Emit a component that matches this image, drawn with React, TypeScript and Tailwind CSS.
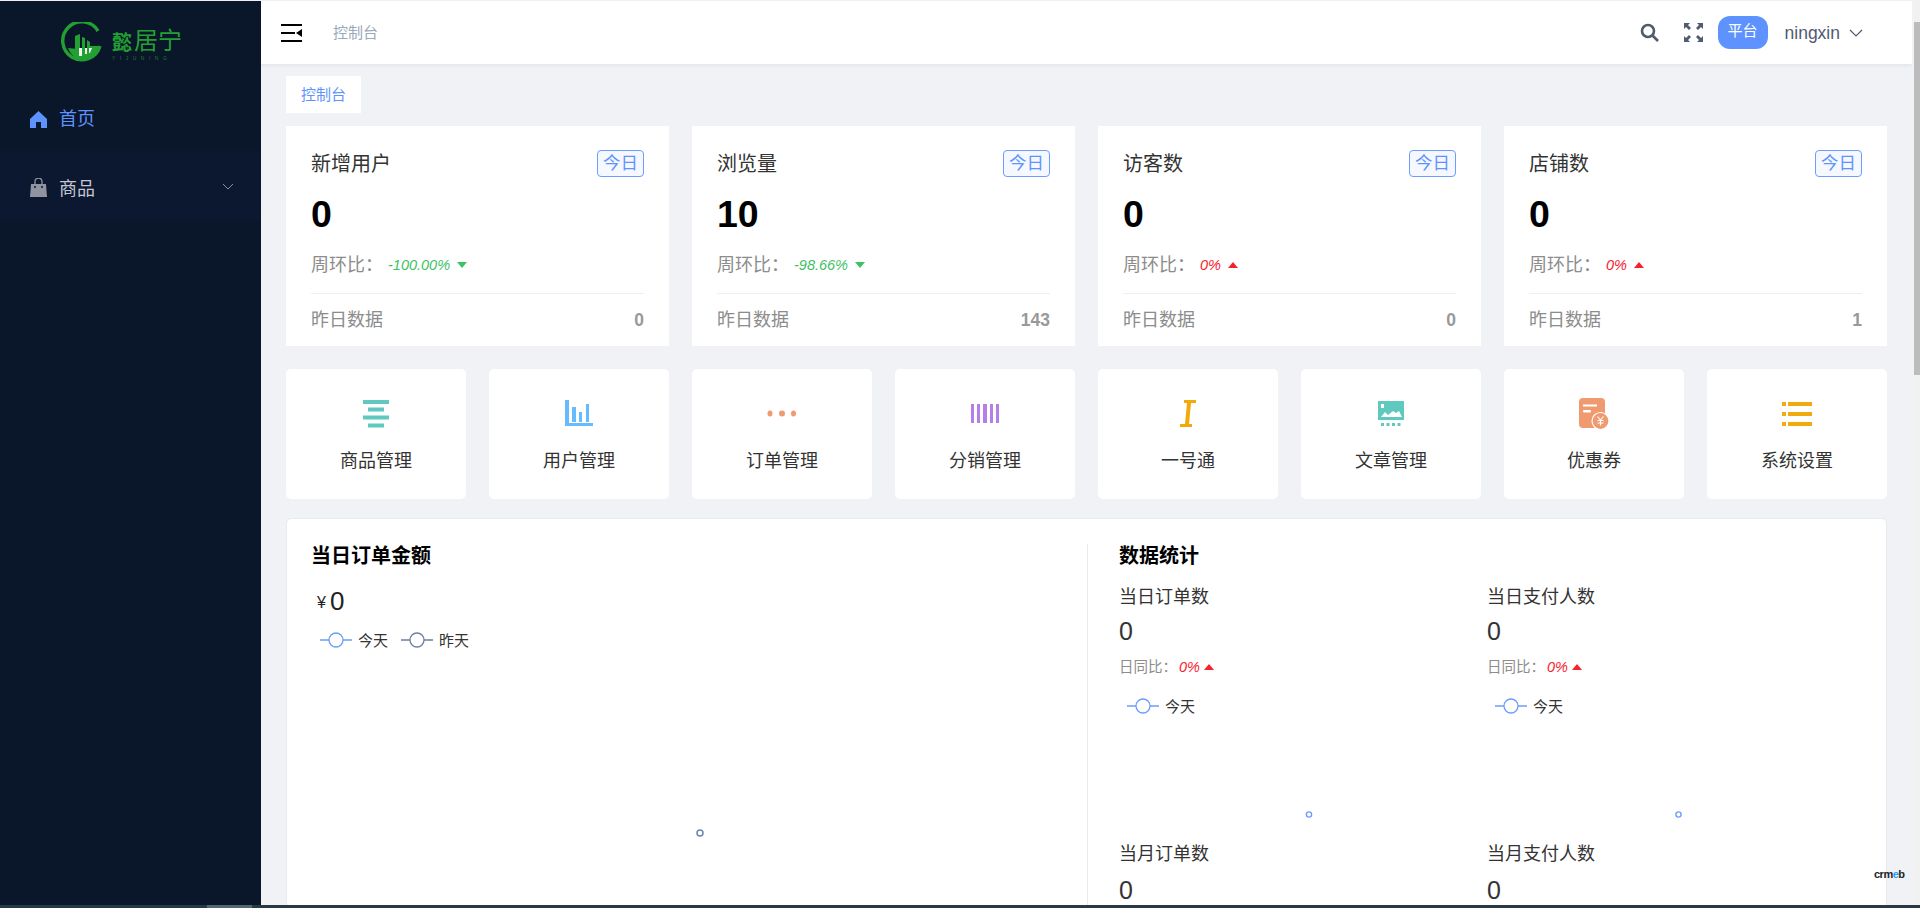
import React from 'react'

const stats = [
  { title: '新增用户', value: '0', rate: '-100.00%', up: false, yesterday: '0' },
  { title: '浏览量', value: '10', rate: '-98.66%', up: false, yesterday: '143' },
  { title: '访客数', value: '0', rate: '0%', up: true, yesterday: '0' },
  { title: '店铺数', value: '0', rate: '0%', up: true, yesterday: '1' },
]

const GoodsIcon = () => (
  <svg width="26" height="28" viewBox="0 0 26 28" fill="#5fc9c0">
    <rect x="0" y="0" width="26" height="4" />
    <rect x="5" y="7.5" width="16" height="4" />
    <rect x="0" y="15.5" width="26" height="4" />
    <rect x="5" y="23.5" width="16" height="4" />
  </svg>
)

const UserIcon = () => (
  <svg width="28" height="28" viewBox="0 0 28 28" fill="#66bbff">
    <rect x="0" y="0" width="4" height="26" />
    <rect x="0" y="23" width="28" height="3" />
    <rect x="7" y="7" width="4" height="15" />
    <rect x="14" y="12" width="3" height="10" />
    <rect x="21" y="4" width="3" height="18" />
  </svg>
)

const OrderIcon = () => (
  <svg width="30" height="28" viewBox="0 0 30 28" fill="#f09a70">
    <ellipse cx="3" cy="13.5" rx="2.5" ry="3" />
    <ellipse cx="15" cy="13.5" rx="3" ry="3" />
    <ellipse cx="26.5" cy="13.5" rx="2.5" ry="3" />
  </svg>
)

const DistIcon = () => (
  <svg width="28" height="28" viewBox="0 0 28 28" fill="#b57fe8">
    <rect x="0" y="4" width="3" height="19" />
    <rect x="6" y="4" width="3" height="19" />
    <rect x="12" y="4" width="4" height="19" />
    <rect x="19" y="4" width="3" height="19" />
    <rect x="25" y="4" width="3" height="19" />
  </svg>
)

const OneIcon = () => (
  <svg width="16" height="28" viewBox="0 0 16 28" fill="#f2a90a">
    <rect x="4" y="0" width="12" height="3" />
    <rect x="0" y="24" width="12" height="3" />
    <polygon points="7,3 11,3 9,24 5,24" />
  </svg>
)

const ArticleIcon = () => (
  <svg width="26" height="28" viewBox="0 0 26 28" fill="#5fc9c0">
    <path d="M0 1h26v19H0z" />
    <rect x="3" y="4" width="3" height="4" fill="#fff" />
    <path d="M3 17l4-5 3 3 5-4 3 2 3-2 3 6z" fill="#fff" />
    <rect x="3" y="23" width="3" height="3" />
    <rect x="8.5" y="23" width="3" height="3" />
    <rect x="14" y="23" width="3" height="3" />
    <rect x="19.5" y="23" width="3" height="3" />
  </svg>
)

const CouponIcon = () => (
  <svg width="30" height="32" viewBox="0 0 30 32">
    <rect x="0" y="0" width="26" height="30" rx="4" fill="#f09a70" />
    <rect x="4" y="6.5" width="14" height="2" fill="#fff" />
    <rect x="4" y="12" width="8" height="2.5" rx="1" fill="#fff" />
    <circle cx="21.5" cy="23" r="8.5" fill="#f09a70" stroke="#fff" strokeWidth="1.2" />
    <path d="M18.5 18.5l3 3.5 3-3.5M21.5 22v5.5M18.5 22.5h6M18.5 25h6" fill="none" stroke="#fff" strokeWidth="1.1" />
  </svg>
)

const ListIcon = () => (
  <svg width="30" height="28" viewBox="0 0 30 28" fill="#f2ab0e">
    <rect x="0" y="2" width="4" height="4" />
    <rect x="6" y="2" width="24" height="4" />
    <rect x="0" y="12" width="4" height="4" />
    <rect x="6" y="12" width="24" height="4" />
    <rect x="0" y="22" width="4" height="4" />
    <rect x="6" y="22" width="24" height="4" />
  </svg>
)

const quickLinks = [
  { label: '商品管理', icon: <GoodsIcon /> },
  { label: '用户管理', icon: <UserIcon /> },
  { label: '订单管理', icon: <OrderIcon /> },
  { label: '分销管理', icon: <DistIcon /> },
  { label: '一号通', icon: <OneIcon /> },
  { label: '文章管理', icon: <ArticleIcon /> },
  { label: '优惠券', icon: <CouponIcon /> },
  { label: '系统设置', icon: <ListIcon /> },
]

const Legend = ({ label, color }: { label: string; color: string }) => (
  <div className="flex items-center gap-[6px]">
    <svg width="32" height="16" viewBox="0 0 32 16" fill="none">
      <path d="M0 8h9M23 8h9" stroke={color} strokeWidth="1.3" />
      <circle cx="16" cy="8" r="7" stroke={color} strokeWidth="1.3" fill="#fff" />
    </svg>
    <span className="text-[15px] leading-none text-[#333]">{label}</span>
  </div>
)

const Triangle = ({ up, color }: { up: boolean; color: string }) => (
  <svg width="10" height="6" viewBox="0 0 10 6" fill={color}>
    <polygon points={up ? '5,0 10,6 0,6' : '0,0 10,0 5,6'} />
  </svg>
)

const StatCard = ({ title, value, rate, up, yesterday }: (typeof stats)[number]) => (
  <div className="bg-white h-[220px] px-[25px] pt-[24px]">
    <div className="flex justify-between items-start h-[27px]">
      <span className="text-[20px] leading-[28px] text-[#333]">{title}</span>
      <span className="w-[47px] h-[27px] flex items-center justify-center rounded-[4px] border border-[#6f9cff] bg-[#f5f8ff] text-[17.5px] leading-none text-[#5e93ff]">今日</span>
    </div>
    <div className="mt-[17px] h-[40px] text-[37.5px] leading-[40px] font-bold text-black">{value}</div>
    <div className="mt-[19px] flex items-center h-[24px]">
      <span className="w-[77px] text-[18px] leading-none text-[#8c8c8c]">周环比：</span>
      <span className={`italic text-[14.5px] leading-none ${up ? 'text-[#f5222d]' : 'text-[#3dc263]'}`}>{rate}</span>
      <span className="ml-[7px] flex">
        <Triangle up={up} color={up ? '#f5222d' : '#3dc263'} />
      </span>
    </div>
    <div className="mt-[16px] border-t border-[#eeeeee] pt-[13px] flex justify-between items-center">
      <span className="text-[18px] leading-[26px] text-[#8c8c8c]">昨日数据</span>
      <span className="text-[17.5px] leading-[26px] font-bold text-[#999]">{yesterday}</span>
    </div>
  </div>
)

const Metric = ({ title, rate, dotX }: { title: string; rate?: boolean; dotX?: number }) => (
  <div>
    <div className="text-[18px] leading-[24px] text-[#333]">{title}</div>
    <div className={`${rate ? 'mt-[10px]' : 'mt-[12px]'} text-[25px] leading-[24px] text-[#333]`}>0</div>
    {rate && (
      <>
        <div className="mt-[14px] flex items-center h-[20px] text-[14.5px] leading-none text-[#8c8c8c]">
          <span className="w-[60px]">日同比：</span>
          <span className="italic text-[#f5222d]">0%</span>
          <span className="ml-[4px] flex">
            <Triangle up color="#f5222d" />
          </span>
        </div>
        <div className="mt-[21px] pl-[8px]">
          <Legend label="今天" color="#6f9cff" />
        </div>
        <svg className="block w-full h-[128px]" viewBox="0 0 368 128" fill="none">
          <circle cx={dotX} cy="100.5" r="2.6" stroke="#6f9cff" strokeWidth="1.4" fill="#fff" />
        </svg>
      </>
    )}
  </div>
)

export default function App() {
  return (
    <div className="w-[1920px] h-[908px] overflow-hidden flex flex-col bg-[#f0f2f6] font-['Liberation_Sans','Noto_Sans_CJK_SC',sans-serif]">
      <div className="h-px bg-[#f0f0f0] shrink-0" />
      <div className="flex flex-1 min-h-0">
        {/* sidebar */}
        <aside className="w-[261px] shrink-0 bg-[#0a1629]">
          <div className="h-[86px] pl-[60px] pt-[21px] flex items-start gap-[10px]">
            <svg width="42" height="42" viewBox="0 0 42 42" fill="none">
              <path d="M38 9A19 19 0 1 0 40 24" stroke="#22a033" strokeWidth="3.4" />
              <path d="M8 26c3 8 10 13 18 11 8-2 12-7 14-13H29v3H18z" fill="#22a033" />
              <path d="M15 14l5-2v18h-5zM22 15l3 1v14h-3zM27 18l3 2v8h-3z" fill="#22a033" />
              <path d="M19 26h3v8h-3zM25 26h2v6h-2zM29 26h3l-2 5h-1z" fill="#eef6ee" />
            </svg>
            <div className="pt-[7px] text-[#22a033]">
              <div className="flex items-end h-[24px] leading-none">
                <span className="text-[20px] font-bold">懿</span>
                <span className="text-[24px] ml-[2px]">居宁</span>
              </div>
              <div className="mt-[2px] w-[70px] text-[5px] leading-[6px] tracking-[4.5px] text-[#1d7f2a]">YIJUNING</div>
            </div>
          </div>
          <div className="h-[64px] pl-[30px] flex items-center gap-[12px]">
            <svg width="17" height="17" viewBox="0 0 17 17" fill="#5e93ff">
              <path d="M8.5 0L17 8v9h-6v-6H6v6H0V8z" />
            </svg>
            <span className="text-[18px] text-[#5e93ff]">首页</span>
          </div>
          <div className="h-[70px] pl-[30px] pr-[27px] pt-[3px] bg-[#0c1730] flex items-center">
            <svg width="17" height="19" viewBox="0 0 17 19" fill="#90949e">
              <path d="M5 6V3.5a3.5 3.5 0 0 1 7 0V6" fill="none" stroke="#90949e" strokeWidth="1.3" />
              <path d="M1 6h15l1 13H0z" />
              <circle cx="5" cy="9" r="1" fill="#0c1730" />
              <circle cx="12" cy="9" r="1" fill="#0c1730" />
            </svg>
            <span className="ml-[12px] pt-[3px] flex-1 text-[18px] text-[#c3c8d2]">商品</span>
            <svg className="mb-[2px]" width="12" height="7" viewBox="0 0 12 7" fill="none" stroke="#8b909b" strokeWidth="1">
              <path d="M1 1l5 5 5-5" />
            </svg>
          </div>
        </aside>

        {/* main */}
        <main className="w-[1651px] shrink-0 min-h-0 overflow-hidden">
          <header className="h-[63px] bg-white shadow-[0_1px_4px_rgba(0,21,41,0.08)] flex items-center pl-[20px] pr-[49px]">
            <svg width="21" height="18" viewBox="0 0 21 18" fill="#000">
              <rect x="0" y="0" width="21" height="2" />
              <rect x="0" y="8" width="14" height="2" />
              <rect x="0" y="16" width="21" height="2" />
              <polygon points="15,9 21,5 21,13" />
            </svg>
            <span className="ml-[31px] pt-[2px] text-[15px] text-[#9aa8bc]">控制台</span>
            <svg className="ml-auto" width="19" height="19" viewBox="0 0 19 19" fill="none" stroke="#515a6e" strokeWidth="2.6">
              <circle cx="8" cy="8" r="6" />
              <path d="M12.5 12.5l5.5 5.5" />
            </svg>
            <svg className="ml-[25px]" width="19" height="19" viewBox="0 0 19 19" fill="#515a6e">
              <path d="M0 0h6L4 2l3 3-2 2-3-3-2 2zM19 0v6l-2-2-3 3-2-2 3-3-2-2zM0 19v-6l2 2 3-3 2 2-3 3 2 2zM19 19h-6l2-2-3-3 2-2 3 3 2-2z" />
            </svg>
            <div className="ml-[15px] w-[50px] h-[33px] rounded-[12px] bg-[#5e93ff] text-white text-[15px] leading-[30px] text-center">平台</div>
            <span className="ml-[17px] pt-[2px] text-[17.5px] font-medium text-[#515a6e]">ningxin</span>
            <svg className="ml-[9px]" width="14" height="8" viewBox="0 0 14 8" fill="none" stroke="#515a6e" strokeWidth="1.2">
              <path d="M1 1l6 6 6-6" />
            </svg>
          </header>

          <div className="px-[25px]">
            <div className="mt-[12px] w-[75px] h-[37px] bg-white text-[15px] leading-[37px] text-center text-[#5e93ff]">控制台</div>

            <div className="mt-[13px] grid grid-cols-4 gap-[23px]">
              {stats.map(s => (
                <StatCard key={s.title} {...s} />
              ))}
            </div>

            <div className="mt-[23px] grid grid-cols-8 gap-[23px]">
              {quickLinks.map(link => (
                <div key={link.label} className="h-[130px] bg-white rounded-[5px] flex flex-col items-center pt-[29px]">
                  <div className="h-[32px] flex items-center justify-center">{link.icon}</div>
                  <div className="mt-[19px] text-[18px] leading-[24px] text-[#333]">{link.label}</div>
                </div>
              ))}
            </div>

            <div className="relative mt-[19px] h-[400px] bg-white rounded-[5px] border border-[#e8eaf0] flex pt-[25px]">
              <section className="w-[800px] shrink-0 pl-[24px]">
                <h2 className="text-[20px] leading-[24px] font-bold text-black">当日订单金额</h2>
                <div className="mt-[19px] ml-[6px] flex items-end h-[28px] text-[#222]">
                  <span className="text-[16px] leading-[24px] mr-[4px]">¥</span>
                  <span className="text-[26px] leading-[28px]">0</span>
                </div>
                <div className="mt-[17px] ml-[9px] flex gap-[13px]">
                  <Legend label="今天" color="#6f9cff" />
                  <Legend label="昨天" color="#6b7fa5" />
                </div>
                <svg className="block w-full h-[200px]" viewBox="0 0 776 200" fill="none">
                  <circle cx="389" cy="185" r="3" stroke="#6b86b4" strokeWidth="1.5" fill="#fff" />
                </svg>
              </section>
              <section className="flex-1 border-l border-[#e8eaec] pl-[31px] pr-[24px] self-stretch">
                <h2 className="text-[20px] leading-[24px] font-bold text-black">数据统计</h2>
                <div className="mt-[17px] grid grid-cols-[368px_1fr]">
                  <Metric title="当日订单数" rate dotX={190} />
                  <Metric title="当日支付人数" rate dotX={188} />
                  <Metric title="当月订单数" />
                  <Metric title="当月支付人数" />
                </div>
              </section>
              <div className="absolute left-[1587px] top-[350px] text-[11px] leading-none font-bold tracking-[-0.5px] text-[#222]">
                crm<span className="text-[#1e9fff]">e</span>b
              </div>
            </div>
          </div>
        </main>

        {/* window scrollbar */}
        <div className="ml-[2px] w-[6px] shrink-0 bg-[#f1f1f1] flex flex-col">
          <div className="h-[21px]" />
          <div className="h-[353px] bg-[#bcbcbc]" />
        </div>
      </div>
      <div className="h-[3px] shrink-0 bg-[#263944] pl-[207px]">
        <div className="w-[45px] h-full bg-[#55686e]" />
      </div>
    </div>
  )
}
